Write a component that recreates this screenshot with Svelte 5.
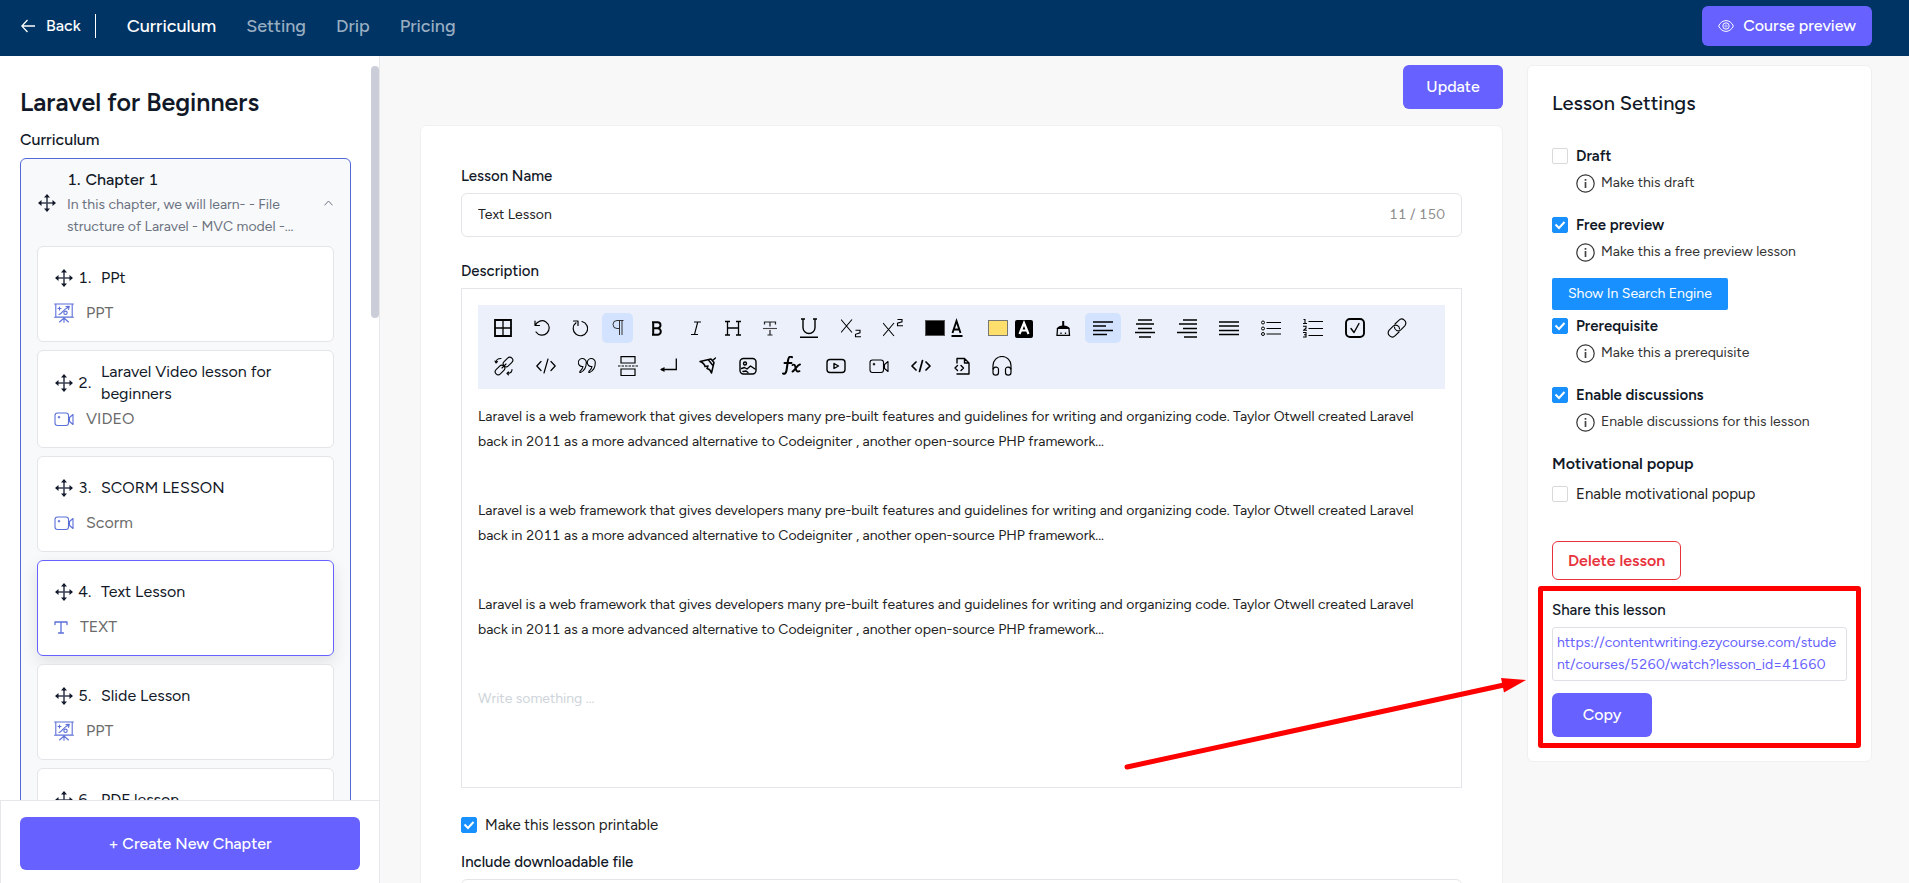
<script>
  const S = 'fill="none" stroke="currentColor" stroke-linecap="round" stroke-linejoin="round"';

  const video = `<g ${S} stroke-width="1.1"><rect x="1" y="4" width="13.5" height="12.5" rx="2.5"/><path d="M15.500 8.500 19 5.500v10l-3.500-3zM5 7.300v1.600M4.200 8.100h1.600"/></g>`;
  const ppt = `<g ${S} stroke-width="1.100"><path d="M.6 1h18.800M1.800 1v13h16.400V1M.6 14.300h18.800M10 14.300v4.900M9.500 15.500 5.500 19M10.500 15.500l4 3.500M4 5.500h3M5.500 4v3M5 11.500c3-1 4-5 9-7M12 3.600l3.200-.2-.6 3"/><circle cx="11.500" cy="9.800" r="1.700"/></g>`;
  const textType = `<path ${S} stroke-width="1.300" d="M1 4.500V2h12v2.500M7 2v11M4.500 13h5"/>`;

  const tools = [
    { name: 'Table', w: 18, art: `<path fill="none" stroke="#000" stroke-width="1.800" d="M1 2h16v16H1z"/><path stroke="#000" stroke-width="1.300" d="M9 2v16M1 10h16"/>` },
    { name: 'Undo', w: 16, art: `<path ${S} stroke-width="1.200" d="M1 3v4.500h4.500M1.300 7.200A7.200 7.200 0 1 1 2 14"/>` },
    { name: 'Redo', w: 16, art: `<path ${S} stroke-width="1.200" d="M1.500 3h4.500v4.500M4 4.800A7.200 7.200 0 1 0 10 3.500"/>` },
    { name: 'Paragraph', w: 15, active: true, art: `<path fill="none" stroke="#333" stroke-width="1" d="M13.500 2.500H7a4 4 0 0 0 0 8h2M9.500 2.500V17M12 2.500V17"/>` },
    { name: 'Bold', w: 20, art: `<path fill="none" stroke="#000" stroke-width="2" d="M6.200 4v13M5 4.200h5.500a3 3 0 0 1 0 6H6M10.500 10.200a3.300 3.300 0 0 1 0 6.600H5"/>` },
    { name: 'Italic', w: 14, art: `<path fill="none" stroke="#000" stroke-width="1.100" d="M5 4h7M2 16.500h7M8.700 4 5.500 16.500"/>` },
    { name: 'Heading', w: 16, art: `<path fill="none" stroke="#000" stroke-width="1.300" d="M0 3.500h5M11 3.500h5M0 17h5M11 17h5M2.500 3.500V17M13.500 3.500V17M2.500 10h11"/>` },
    { name: 'Strike', w: 14, art: `<path fill="none" stroke="#222" stroke-width="1.200" d="M1.500 6.500V4h11v2.500M7 4v4.500M7 12v5M4.500 17h5"/><path stroke="#444" stroke-width="1.100" d="M0 10.500h14"/>` },
    { name: 'Underline', w: 20, art: `<path fill="none" stroke="#000" stroke-width="1.400" d="M2 1h4M14 1h4M4 1v8.500a6 6 0 0 0 12 0V1M1 19.200h18"/>` },
    { name: 'Subscript', w: 20, art: `<path fill="none" stroke="#000" stroke-width="1.100" d="M0 1.500l11 13M11 1.500 0 14.500M14.500 12.300h4.500v2.500l-4.500 1.500v2.500h5.500"/>` },
    { name: 'Superscript', w: 20, art: `<path fill="none" stroke="#000" stroke-width="1.100" d="M0 5l11 13M11 5 0 18M14.500 1.500h4.500v2.300l-4.500 1.400v2.500h5.500"/>` },
    { name: 'Font color', w: 41, art: `<rect x="0.500" y="2.500" width="19" height="15" stroke="#555"/><path fill="none" stroke="#000" stroke-width="1.900" d="M27.500 15 31.500 3l4 12M29 11.500h5M26.500 18h11"/>` },
    { name: 'Background color', w: 45, art: `<rect x="0.500" y="2.500" width="19" height="15" fill="#ffdf6b" stroke="#777"/><rect x="27" y="2" width="18" height="18" rx="2"/><path fill="none" stroke="#fff" stroke-width="2.200" d="M31.500 16 36 5l4.500 11M33 12.500h6"/>` },
    { name: 'Clear format', w: 16, art: `<path d="M7.200 3h2v4.500c4 .5 5.300 2 5.800 3.500H1.400C2 9.500 3.500 8 7.200 7.500z"/><path fill="none" stroke="#000" stroke-width="1.300" d="M2.500 11 2 17.300h12.500L14 11M6 14.500v1.500M10.500 14.500v1.500"/>` },
    { name: 'Align left', w: 20, active: true, art: `<path stroke="#000" stroke-width="1.500" d="M0 4h20M0 8h13M0 12.500h20M0 16.500h14"/>` },
    { name: 'Align center', w: 20, art: `<path stroke="#000" stroke-width="1.300" d="M3 2h14M1 6h18M3 10.500h14M0 14.500h20M4 19h12"/>` },
    { name: 'Align right', w: 20, art: `<path stroke="#000" stroke-width="1.300" d="M6 2h14M2 6h18M6 10.500h14M0 14.500h20M7 19h13"/>` },
    { name: 'Justify', w: 20, art: `<path stroke="#000" stroke-width="1.500" d="M0 4h20M0 8h20M0 12.500h20M0 16.500h20"/>` },
    { name: 'Bullet list', w: 20, art: `<g fill="none" stroke="#000"><circle cx="2" cy="4.500" r="1.500"/><circle cx="2" cy="10.500" r="1.500"/><circle cx="2" cy="16" r="1.500"/><path stroke-width="1.200" d="M5.500 4.500H20M5.500 10.500H20M5.500 16H20"/></g>` },
    { name: 'Number list', w: 20, art: `<path fill="none" stroke="#000" stroke-width="1.100" d="M5.500 3.500H20M5.500 10.500H20M5.500 17.500H20M.5 1.500h1.500v4M0 5.500h4M0 8.200h3v2l-2.500 2H4M0 14.500h3v4.500H0M1 16.700h2"/>` },
    { name: 'Check list', w: 20, art: `<g ${S}><rect x="1" y="1" width="18" height="18" rx="4" stroke-width="1.900"/><path stroke-width="1.400" d="m6 10.500 3 4L14 5.500"/></g>` },
    { name: 'Link', w: 20, art: `<g ${S} stroke-width="1.100"><path d="m8 6 3.800-3.700c3.500-3.500 9.200 1.200 6 5.500l-4 4c-2.500 2.300-6.500.5-6.300-2.800"/><path d="m12 14-3.800 3.700c-3.500 3.500-9.200-1.200-6-5.500l4-4c2.500-2.300 6.500-.5 6.300 2.800"/></g>` },
    { name: 'Unlink', w: 20, art: `<g ${S} stroke-width="1.100"><g transform="rotate(-45 14 6)"><rect x="8.500" y="3" width="11" height="6" rx="3"/></g><g transform="rotate(-45 6 14)"><rect x=".5" y="11" width="11" height="6" rx="3"/></g><path d="M8 12l4-4M2 6.500c0-2.500 1.500-4 5-4M18 13.500c0 2.500-1.500 4-5 4M1 5 2 7l1.500-1.300M14.500 16 13 17.500l1.500 1.300"/></g>` },
    { name: 'Inline code', w: 20, art: `<path ${S} stroke-width="1.200" d="M5 5.500.8 10 5 14.500M15 5.500l4.200 4.500-4.200 4.500M12 3 8 17"/>` },
    { name: 'Quote', w: 18, art: `<path ${S} stroke-width="1.100" d="M5 10.500A4 4 0 1 1 8.300 6.500C8.300 11 6 15 2.500 16.500 1.500 16.800 1.500 16 2.200 15.200 3.700 13.500 4.800 12.500 5 10.500zM14 10.500A4 4 0 1 1 17.300 6.500C17.300 11 15 15 11.500 16.500 10.500 16.800 10.500 16 11.200 15.200 12.700 13.500 13.800 12.500 14 10.500z"/>` },
    { name: 'Page break', w: 20, art: `<path fill="none" stroke="#000" stroke-width="1.200" d="M3 7V.7h14V7zM3 13h14v6.500H3z"/><path stroke="#555" stroke-width="1.300" stroke-dasharray="2.500 1" d="M0 10h20"/>` },
    { name: 'Line break', w: 17, art: `<path fill="none" stroke="#000" stroke-width="1.300" d="M16.300 2.500v11H1"/><path d="M0 13.500 4.500 11v5z"/>` },
    { name: 'Format painter', w: 17, art: `<g ${S} stroke-width="1.500"><path d="M1 5.500 12 3l3 3.500L12.500 17c-1-3-2-4-4.500-4.500l1-2.500-3 .5C5.500 8 3.500 6.500 1 5.500zM13.500 4.500 16.500 2M9.500 4l4 5"/></g>` },
    { name: 'Image', w: 20, art: `<g ${S} stroke-width="1.400"><rect x="2" y="2.500" width="16" height="15.500" rx="3.500"/><circle cx="7" cy="7.500" r="1.500"/><path d="m3.500 12.500 3-1 2.500 1.500 3.500-3 4.500 3M5 15.500l3-.5 2 1.500"/></g>` },
    { name: 'Formula', w: 23, art: `<path ${S} stroke-width="2" d="M12 1.200C9.500-.3 8.500 1.500 8 4.500L6.500 14.500c-.5 3-2 3.500-3.500 3M4.500 7H11.500"/><path ${S} stroke-width="1.900" d="M12.500 9c2-1 2.500 0 3 2.500s1 5 4 3.700M20 8.500c-3 .5-5.500 6.500-7.500 7"/>` },
    { name: 'YouTube', w: 22, art: `<g ${S} stroke-width="1.400"><rect x="2" y="3.500" width="18" height="13" rx="3"/><path d="M9 7.500v5l4.500-2.500z"/></g>` },
    { name: 'Video', w: 20, art: video },
    { name: 'Code view', w: 20, art: `<path ${S} stroke-width="1.700" d="M5 6 1 10l4 4M15 6l4 4-4 4M11.500 4.500l-3 11"/>` },
    { name: 'Embed file', w: 17, art: `<path ${S} stroke-width="1.400" d="M4 7V2.500h7.500L16 7v11H4M11.500 2.500V7H16M4.500 9.500 2 12l2.500 2.500M8 9.500l2.500 2.500L8 14.500"/>` },
    { name: 'Audio', w: 20, art: `<g ${S} stroke-width="1.200"><path d="M1 13V9.500a9 9 0 0 1 18 0V13"/><path d="M1 14c0-3.500 5.500-4 5.500-.5v3c0 3.500-5.500 3.500-5.500 0zM19 14c0-3.500-5.500-4-5.500-.5v3c0 3.500 5.500 3.500 5.500 0z"/></g>` }
  ];

  const lessons = [
    { title: 'PPt', kind: 'PPT', art: ppt },
    { title: 'Laravel Video lesson for beginners', kind: 'VIDEO', art: video },
    { title: 'SCORM LESSON', kind: 'Scorm', art: video },
    { title: 'Text Lesson', kind: 'TEXT', art: textType, small: true, active: true },
    { title: 'Slide Lesson', kind: 'PPT', art: ppt },
    { title: 'PDF lesson' }
  ];

  const paragraph =
    'Laravel is a web framework that gives developers many pre-built features and guidelines for writing and organizing code. Taylor Otwell created Laravel back in 2011 as a more advanced alternative to Codeigniter , another open-source PHP framework...';

  let lessonName = $state('Text Lesson');
  let printable = $state(true);
  let popup = $state(false);
  let options = $state([
    { id: 'draft', label: 'Draft', hint: 'Make this draft', on: false },
    { id: 'free', label: 'Free preview', hint: 'Make this a free preview lesson', on: true },
    { id: 'prereq', label: 'Prerequisite', hint: 'Make this a prerequisite', on: true },
    { id: 'discuss', label: 'Enable discussions', hint: 'Enable discussions for this lesson', on: true }
  ]);
</script>

{#snippet move()}
  <svg class="move" width="18" height="18" viewBox="0 0 18 18" aria-hidden="true">
    <path stroke="#3b4252" stroke-width="1.600" d="M9 2v14M2 9h14" />
    <path fill="#111827" d="M9 0l3 3.500H6zM9 18l3-3.500H6zM0 9l3.500-3v6zM18 9l-3.500-3v6z" />
  </svg>
{/snippet}

{#snippet option(o)}
  <div class="option">
    <input type="checkbox" id={o.id} bind:checked={o.on} />
    <label for={o.id}>{o.label}</label>
    <p class="hint">
      <svg width="19" height="19" viewBox="0 0 19 19" aria-hidden="true">
        <circle cx="9.500" cy="9.500" r="8.700" fill="none" stroke="#333" stroke-width="1.200" />
        <path stroke="#444" stroke-width="1.700" d="M9.500 8v6M9.500 5v1.700" />
      </svg>
      {o.hint}
    </p>
  </div>
{/snippet}

<div class="page">
  <header>
    <a class="back" href="#back">
      <svg width="14" height="14" viewBox="0 0 14 14" aria-hidden="true"><path fill="none" stroke="#fff" stroke-width="1.300" d="M14 7H1M6.500 1 .8 7l5.700 6" /></svg>
      Back
    </a>
    <nav>
      <a class="current" href="#curriculum">Curriculum</a>
      <a href="#setting">Setting</a>
      <a href="#drip">Drip</a>
      <a href="#pricing">Pricing</a>
    </nav>
    <button class="primary preview">
      <svg width="16" height="12" viewBox="0 0 16 12" fill="none" stroke="#fff" aria-hidden="true"><path d="M.6 6C4-1.200 12-1.200 15.400 6 12 13.200 4 13.200.6 6z" /><circle cx="8" cy="6" r="3.200" /><circle cx="8" cy="6" r="1.200" stroke-width=".6" /></svg>
      Course preview
    </button>
  </header>

  <div class="body">
    <aside class="sidebar">
      <div class="outline">
        <h1>Laravel for Beginners</h1>
        <h2>Curriculum</h2>
        <section class="chapter">
          <div class="chapter-head">
            {@render move()}
            <div class="chapter-text">
              <h3><span>1.</span> Chapter 1</h3>
              <p>In this chapter, we will learn- - File structure of Laravel - MVC model -...</p>
            </div>
            <svg width="9" height="6" viewBox="0 0 9 6" aria-hidden="true"><path fill="none" stroke="#6b7280" d="M.5 5.300 4.500 1l4 4.300" /></svg>
          </div>
          {#each lessons as l, i}
            <article class="lesson" class:active={l.active}>
              <div class="lesson-title">
                {@render move()}
                <span class="num">{i + 1}.</span>
                <span>{l.title}</span>
              </div>
              {#if l.kind}
                <div class="kind">
                  <svg width={l.small ? 14 : 20} height={l.small ? 14 : 20} viewBox={l.small ? '0 0 14 14' : '0 0 20 20'} aria-hidden="true">{@html l.art}</svg>
                  {l.kind}
                </div>
              {/if}
            </article>
          {/each}
        </section>
        <div class="thumb"></div>
      </div>
      <div class="create"><button class="primary">+ Create New Chapter</button></div>
    </aside>

    <main>
      <div class="actions"><button class="primary">Update</button></div>
      <section class="card">
        <label class="title" for="lesson-name">Lesson Name</label>
        <div class="field">
          <input type="text" id="lesson-name" bind:value={lessonName} />
          <span>{lessonName.length} / 150</span>
        </div>
        <div class="title" id="desc-label">Description</div>
        <div class="editor">
          <div class="toolbar" role="toolbar" aria-label="Formatting">
            {#each tools as t}
              <button class:active={t.active} aria-label={t.name}>
                <svg width={t.w} height="20" viewBox="0 0 {t.w} 20" aria-hidden="true">{@html t.art}</svg>
              </button>
            {/each}
          </div>
          {#each [1, 2, 3] as n (n)}
            <p>{paragraph}</p>
          {/each}
          <p class="placeholder">Write something ...</p>
        </div>
        <div class="check">
          <input type="checkbox" id="printable" bind:checked={printable} />
          <label for="printable">Make this lesson printable</label>
        </div>
        <label class="title" for="file-name">Include downloadable file</label>
        <div class="field"><input type="text" id="file-name" /></div>
      </section>
    </main>

    <aside class="settings">
      <h2>Lesson Settings</h2>
      {@render option(options[0])}
      {@render option(options[1])}
      <button class="search">Show In Search Engine</button>
      {@render option(options[2])}
      {@render option(options[3])}
      <h3>Motivational popup</h3>
      <div class="check">
        <input type="checkbox" id="popup" bind:checked={popup} />
        <label for="popup">Enable motivational popup</label>
      </div>
      <button class="delete">Delete lesson</button>
      <section class="share">
        <h4>Share this lesson</h4>
        <p>https://contentwriting.ezycourse.com/student/courses/5260/watch?lesson_id=41660</p>
        <button class="primary">Copy</button>
        <svg class="arrow" width="404" height="96" viewBox="0 0 404 96" aria-hidden="true">
          <path stroke="#f00" stroke-width="5" stroke-linecap="round" d="M3 91 380 9" />
          <path fill="#f00" d="M402 4 377 2l3 14.500z" />
        </svg>
      </section>
    </aside>
  </div>
</div>

<style>
  :global(body) { margin: 0; }
  * { box-sizing: border-box; }
  .page {
    height: 100vh;
    display: flex;
    flex-direction: column;
    overflow: hidden;
    background: #f8f8f8;
    color: #111827;
    font: 400 16px/24px Figtree, Lato, sans-serif;
    font-variant-numeric: tabular-nums;
  }
  h1, h2, h3, h4, p { margin: 0; font-weight: 500; }
  button { font: inherit; cursor: pointer; }
  svg { flex: none; display: block; }
  .primary {
    border: 0;
    border-radius: 6px;
    background: #6661ff;
    color: #fff;
    font-weight: 500;
    height: 44px;
  }

  header {
    flex: none;
    height: 56px;
    display: flex;
    align-items: center;
    padding: 0 37px 4px 21px;
    background: #003465;
  }
  header a { color: #fff; text-decoration: none; }
  .back {
    display: flex;
    align-items: center;
    gap: 11px;
    padding-right: 14px;
    border-right: 1px solid #fff;
    font-weight: 500;
  }
  nav {
    display: flex;
    gap: 30px;
    margin: 0 auto 0 31px;
    font-size: 18px;
    font-weight: 500;
  }
  nav a { color: #99aec1; }
  nav .current { color: #fff; }
  .preview {
    display: flex;
    align-items: center;
    gap: 9px;
    height: 40px;
    padding: 0 16px;
  }

  .body { flex: 1; min-height: 0; display: flex; }
  .sidebar {
    flex: none;
    width: 380px;
    display: flex;
    flex-direction: column;
    background: #fff;
    border-right: 1px solid #e5e7eb;
  }
  .outline {
    position: relative;
    flex: 1;
    min-height: 0;
    overflow: hidden;
    padding: 30px 28px 0 20px;
  }
  .thumb {
    position: absolute;
    top: 10px;
    right: 0;
    width: 8px;
    height: 252px;
    border-radius: 4px;
    background: #cbced9;
  }
  h1 { font-size: 25px; font-weight: 600; line-height: 32px; }
  .outline h2 { margin: 10px 0 6px; font-size: 16px; line-height: 24px; }
  .chapter {
    display: flex;
    flex-direction: column;
    gap: 8px;
    padding: 9px 16px;
    border: 1px solid #5468d6;
    border-radius: 6px;
    background: #f8f9fb;
  }
  .chapter-head {
    display: flex;
    align-items: center;
    gap: 11px;
    padding: 0 1px;
  }
  .chapter-text { flex: 1; }
  .chapter h3 { display: flex; gap: 5px; margin-bottom: 2px; font-size: 16px; line-height: 24px; }
  .chapter p { color: #6b7280; font-size: 14px; font-weight: 400; line-height: 22px; }
  .lesson {
    min-height: 96px;
    padding: 10px 16px 16px;
    border: 1px solid #e4e5e8;
    border-radius: 6px;
    background: #fff;
  }
  .lesson.active { border-color: #6661ff; box-shadow: 0 6px 16px rgb(0 0 0 / 10%); }
  .lesson-title {
    display: flex;
    align-items: center;
    min-height: 42px;
    margin-bottom: 2px;
    padding-left: 1px;
    line-height: 22px;
  }
  .num { flex: none; width: 23px; margin-left: 5px; }
  .kind {
    display: flex;
    align-items: center;
    gap: 12px;
    color: #6b6b6b;
    line-height: 24px;
  }
  .kind svg { color: #5b6fd8; }
  .create {
    flex: none;
    padding: 16px 19px 13px;
    border: solid #e5e7eb;
    border-width: 1px 0 0 1px;
  }
  .create button { width: 100%; height: 53px; }

  main {
    flex: 1;
    min-width: 0;
    padding: 9px 24px 0 40px;
    overflow: hidden;
  }
  .actions { display: flex; justify-content: flex-end; margin-bottom: 16px; }
  .actions button { width: 100px; }
  .card {
    padding: 38px 40px;
    border: 1px solid #eef0f2;
    border-radius: 6px;
    background: #fff;
  }
  .title { display: block; margin-bottom: 5px; font-size: 15px; font-weight: 500; line-height: 24px; }
  .field {
    display: flex;
    align-items: center;
    height: 44px;
    margin-bottom: 22px;
    padding: 0 16px;
    border: 1px solid #e4e5e8;
    border-radius: 6px;
  }
  .field input { flex: 1; border: 0; outline: 0; padding: 0; font: inherit; font-size: 14px; color: #222; }
  .field span { color: #8c8c8c; font-size: 14px; }
  .editor { min-height: 500px; padding: 16px; border: 1px solid #e4e5e8; margin-bottom: 25px; }
  .toolbar {
    display: flex;
    flex-wrap: wrap;
    gap: 8px 6px;
    padding: 8px;
    margin-bottom: 15px;
    background: #ebf0fa;
  }
  .toolbar button {
    display: flex;
    align-items: center;
    height: 30px;
    padding: 0 8px;
    border: 0;
    border-radius: 5px;
    background: none;
    color: #000;
  }
  .toolbar .active { background: #d2e2ff; }
  .editor p { margin-bottom: 44px; color: #222; font-size: 14px; font-weight: 400; line-height: 25px; }
  .editor .placeholder { margin: 0; color: #ced4da; }

  input[type='checkbox'] {
    appearance: none;
    flex: none;
    width: 16px;
    height: 16px;
    margin: 0;
    border: 1px solid #d9d9d9;
    border-radius: 2px;
    background: #fff;
  }
  input[type='checkbox']:checked {
    border-color: #1890ff;
    background: #1890ff url("data:image/svg+xml,%3Csvg xmlns='http://www.w3.org/2000/svg' viewBox='0 0 14 14'%3E%3Cpath fill='none' stroke='white' stroke-width='2' d='M2.500 6.500 6 10l5.500-6'/%3E%3C/svg%3E") center / 14px no-repeat;
  }
  .check { display: flex; align-items: center; gap: 8px; margin-bottom: 13px; color: #222; font-size: 15px; }

  .settings {
    flex: none;
    align-self: flex-start;
    width: 345px;
    margin: 9px 37px 0 0;
    padding: 22px 24px 23px;
    border: 1px solid #eef0f2;
    border-radius: 6px;
    background: #fff;
  }
  .settings h2 { margin-bottom: 25px; font-size: 20px; line-height: 30px; }
  .option {
    display: grid;
    grid-template-columns: 16px 1fr;
    align-items: center;
    column-gap: 8px;
    margin-bottom: 15px;
  }
  .option label { font-size: 15px; font-weight: 600; line-height: 26px; }
  .hint {
    grid-column: 2;
    display: flex;
    align-items: center;
    gap: 6px;
    color: #333;
    font-size: 14px;
    font-weight: 400;
    line-height: 28px;
  }
  .search {
    display: block;
    height: 32px;
    margin: -3px 0 3px;
    padding: 0 16px;
    border: 0;
    border-radius: 2px;
    background: #1890ff;
    color: #fff;
    font-size: 14px;
  }
  .settings h3 { margin: 16px 0 6px; font-size: 16px; font-weight: 600; line-height: 24px; }
  .delete {
    display: block;
    height: 39px;
    margin: 35px 0 6px;
    padding: 0 15px;
    border: 1px solid #e8323c;
    border-radius: 6px;
    background: #fff;
    color: #e8323c;
    font-weight: 600;
  }
  .share {
    position: relative;
    margin: 0 -14px -10px;
    padding: 7px 9px 6px;
    border: 5px solid #f00;
    border-radius: 3px;
  }
  .share h4 { margin-bottom: 5px; font-size: 15px; line-height: 24px; }
  .share p {
    margin-bottom: 12px;
    padding: 4px;
    border: 1px solid #dfe0e6;
    border-radius: 3px;
    color: #6661ff;
    font-size: 14px;
    font-weight: 400;
    line-height: 22px;
    word-break: break-all;
  }
  .share button { width: 100px; display: block; }
  .arrow { position: absolute; right: 328px; bottom: -29px; pointer-events: none; }
</style>
